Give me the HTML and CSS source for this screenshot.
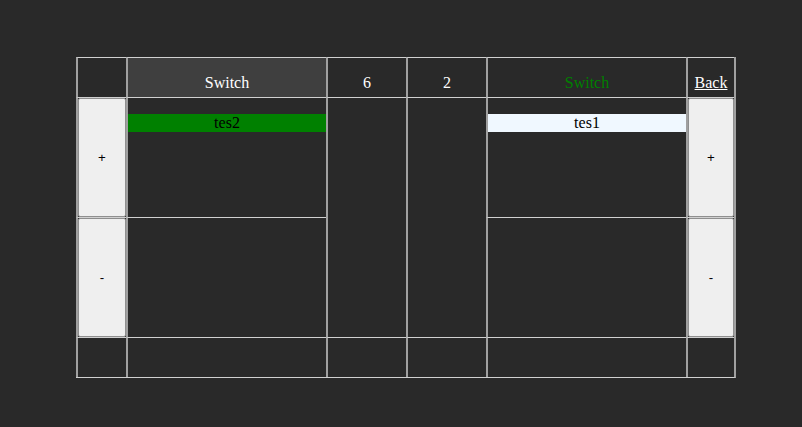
FILE: index.html
```html
<!DOCTYPE html>
<html>
<head>
<meta charset="utf-8">
<link rel="stylesheet" href="styles.css">
</head>
<body>
<table class="grid">
  <tr class="head">
    <td class="c-side"></td>
    <td class="c-wide sel">Switch</td>
    <td class="c-num">6</td>
    <td class="c-num">2</td>
    <td class="c-wide switch-on">Switch</td>
    <td class="c-side-r"><a class="back" href="#">Back</a></td>
  </tr>
  <tr>
    <td class="btn-cell"><button class="btn">+</button></td>
    <td class="list"><p class="item item-green">tes2</p></td>
    <td rowspan="2"></td>
    <td rowspan="2"></td>
    <td class="list"><p class="item item-light">tes1</p></td>
    <td class="btn-cell"><button class="btn">+</button></td>
  </tr>
  <tr>
    <td class="btn-cell"><button class="btn">-</button></td>
    <td class="list"></td>
    <td class="list"></td>
    <td class="btn-cell"><button class="btn">-</button></td>
  </tr>
  <tr class="foot">
    <td></td><td></td><td></td><td></td><td></td><td></td>
  </tr>
</table>
</body>
</html>
```
FILE: styles.css
```css
html, body {
  margin: 0;
  padding: 0;
  background: #292929;
}
body {
  font-family: "Liberation Serif", "Times New Roman", "DejaVu Serif", serif;
  font-size: 16px;
  color: #fff;
}
.grid {
  border-collapse: separate;
  border-spacing: 0;
  table-layout: fixed;
  width: 660px;
  margin: 57px 0 0 76px;
  border-right: 2px solid #a0a0a0;
  border-bottom: 1px solid #d0d0d0;
}
.grid td {
  box-sizing: border-box;
  padding: 0;
  border-left: 2px solid #a0a0a0;
  border-top: 1px solid #d0d0d0;
  text-align: center;
  vertical-align: middle;
  font-family: "Liberation Serif", "Times New Roman", "DejaVu Serif", serif;
  font-size: 16px;
}
.c-side { width: 50px; }
.c-wide { width: 200px; }
.c-num { width: 80px; }
.c-side-r { width: 48px; }
.grid .head td {
  height: 40px;
  padding-top: 10px;
}
.grid .head .sel {
  background: #3f3f3f;
}
.switch-on {
  color: #008000;
}
.back {
  color: #fff;
  text-decoration: underline;
}
.grid .btn-cell,
.grid .list {
  height: 120px;
}
.grid .list {
  vertical-align: top;
}
.grid .foot td {
  height: 40px;
}
.btn {
  display: block;
  box-sizing: border-box;
  width: 100%;
  height: 119px;
  margin: 0;
  padding: 0;
  background: #efefef;
  border: 1px solid #8f8f8f;
  border-radius: 2px;
  font-family: "Liberation Sans", Arial, sans-serif;
  font-size: 13.33px;
  color: #000;
}
.item {
  margin: 16px 0 0;
  line-height: 18px;
  color: #000;
  font-family: "Liberation Serif", "Times New Roman", serif;
}
.item-green {
  background: #008000;
}
.item-light {
  background: #f0f8ff;
}
```
